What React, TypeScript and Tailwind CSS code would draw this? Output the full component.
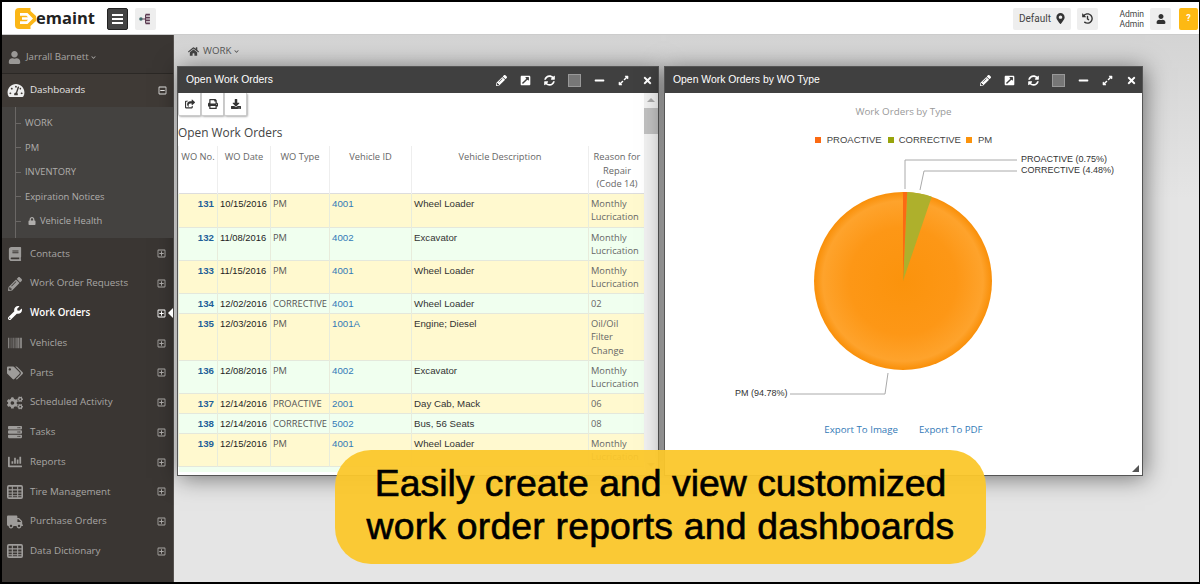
import {
  FaBook,
  FaChartBar,
  FaChevronDown,
  FaCogs,
  FaDownload,
  FaExpandAlt,
  FaExternalLinkSquareAlt,
  FaHistory,
  FaHome,
  FaLock,
  FaMapMarkerAlt,
  FaMinus,
  FaPencilAlt,
  FaPrint,
  FaRegMinusSquare,
  FaRegPlusSquare,
  FaServer,
  FaShareSquare,
  FaSyncAlt,
  FaTachometerAlt,
  FaTags,
  FaTimes,
  FaTruck,
  FaUser,
  FaWrench,
  FaBarcode,
} from "react-icons/fa";

const TableIcon = ({ className }: { className?: string }) => (
  <svg viewBox="0 0 15 13" className={className} fill="none" stroke="currentColor">
    <rect x="0.75" y="0.75" width="13.5" height="11.5" rx="1" strokeWidth="1.5" />
    <path d="M1 4.5H14M1 7.5H14M1 10H14M5 1V12M10 1V12" strokeWidth="1" />
  </svg>
);

const menuItems: { label: string; icon: React.ComponentType<{ className?: string }>; active?: boolean }[] = [
  { label: "Contacts", icon: FaBook },
  { label: "Work Order Requests", icon: FaPencilAlt },
  { label: "Work Orders", icon: FaWrench, active: true },
  { label: "Vehicles", icon: FaBarcode },
  { label: "Parts", icon: FaTags },
  { label: "Scheduled Activity", icon: FaCogs },
  { label: "Tasks", icon: FaServer },
  { label: "Reports", icon: FaChartBar },
  { label: "Tire Management", icon: TableIcon },
  { label: "Purchase Orders", icon: FaTruck },
  { label: "Data Dictionary", icon: TableIcon },
];

const rows = [
  { no: "131", date: "10/15/2016", type: "PM", id: "4001", desc: "Wheel Loader", reason: ["Monthly", "Lucrication"], h: "h-[34px]" },
  { no: "132", date: "11/08/2016", type: "PM", id: "4002", desc: "Excavator", reason: ["Monthly", "Lucrication"], h: "h-[33px]" },
  { no: "133", date: "11/15/2016", type: "PM", id: "4001", desc: "Wheel Loader", reason: ["Monthly", "Lucrication"], h: "h-[33px]" },
  { no: "134", date: "12/02/2016", type: "CORRECTIVE", id: "4001", desc: "Wheel Loader", reason: ["02"], h: "h-[20px]" },
  { no: "135", date: "12/03/2016", type: "PM", id: "1001A", desc: "Engine; Diesel", reason: ["Oil/Oil", "Filter", "Change"], h: "h-[47px]" },
  { no: "136", date: "12/08/2016", type: "PM", id: "4002", desc: "Excavator", reason: ["Monthly", "Lucrication"], h: "h-[33px]" },
  { no: "137", date: "12/14/2016", type: "PROACTIVE", id: "2001", desc: "Day Cab, Mack", reason: ["06"], h: "h-[20px]" },
  { no: "138", date: "12/14/2016", type: "CORRECTIVE", id: "5002", desc: "Bus, 56 Seats", reason: ["08"], h: "h-[20px]" },
  { no: "139", date: "12/15/2016", type: "PM", id: "4001", desc: "Wheel Loader", reason: ["Monthly", "Lucrication"], h: "h-[33px]" },
];

const Logo = () => (
  <div className="flex items-center">
    <svg width="21" height="21" viewBox="0 0 21 21">
      <rect width="21" height="21" rx="4" fill="#fbb616" />
      <path d="M5 5H12.5L18 10.5L12.5 16H5V13.2H11.5L13 11.8H7V9.2H13L11.5 7.8H5Z" fill="#fff" />
      <path d="M15.5 0H21V8L15.5 3Z M15.5 21H21V13L15.5 18Z" fill="#fff" />
    </svg>
    <span className="font-['Open_Sans',sans-serif] text-[16.5px] leading-none font-bold text-[#222]">emaint</span>
  </div>
);

const Sidebar = () => (
  <aside className="flex w-[172px] shrink-0 flex-col border-r border-[#55514e] bg-[#3a3633] font-['Open_Sans',sans-serif]">
    <div className="flex h-[39px] shrink-0 items-center border-b border-[#2b2825] pl-[6px] pt-[6px] text-[9.7px] text-[#a8a6a4]">
      <FaUser className="mr-[5px] text-[13px] text-[#9a9896]" />
      Jarrall Barnett
      <FaChevronDown className="ml-[2px] text-[5px]" />
    </div>
    <div className="flex h-[33px] shrink-0 items-center bg-[#3f3a36] pl-[5px] pr-[5px] text-[9.8px] text-[#e6e5e4]">
      <FaTachometerAlt className="w-[18px] text-[15px] text-[#eee]" />
      <span className="ml-[5px] flex-1">Dashboards</span>
      <FaRegMinusSquare className="mr-[1px] text-[9px]" />
    </div>
    <div className="relative h-[131px] shrink-0 bg-[#444240] pt-[4px] text-[9.4px] text-[#b0aeac]">
      <div className="absolute left-[13px] top-0 h-[131px] w-px bg-[#6a6765]" />
      {["WORK", "PM", "INVENTORY", "Expiration Notices"].map((t) => (
        <div key={t} className="relative flex h-[24.5px] items-center pl-[23px]">
          <div className="absolute left-[13px] h-px w-[6px] bg-[#6a6765]" />
          {t}
        </div>
      ))}
      <div className="relative flex h-[24.5px] items-center pl-[26px]">
        <div className="absolute left-[13px] h-px w-[6px] bg-[#6a6765]" />
        <FaLock className="mr-[4px] text-[8px]" />
        Vehicle Health
      </div>
    </div>
    <nav className="flex flex-col pt-[1px]">
      {menuItems.map((m) => (
        <div
          key={m.label}
          className={`relative flex h-[29.75px] items-center pl-[5px] pr-[7px] text-[9.8px] ${m.active ? "font-semibold text-white" : "text-[#a8a6a4]"}`}
        >
          <m.icon className={`h-[14px] w-[16px] ${m.active ? "text-white" : "text-[#9e9c9a]"}`} />
          <span className="ml-[7px] flex-1">{m.label}</span>
          <FaRegPlusSquare className="text-[9px]" />
          {m.active && (
            <div className="absolute right-0 h-0 w-0 border-y-[5px] border-r-[5px] border-y-transparent border-r-white" />
          )}
        </div>
      ))}
    </nav>
  </aside>
);

const Toolbar = () => (
  <div className="flex items-center gap-[13px] text-[11px] text-white">
    <FaPencilAlt />
    <FaExternalLinkSquareAlt />
    <FaSyncAlt />
    <div className="h-[13px] w-[13px] border border-[#999] bg-[#777]" />
    <FaMinus />
    <FaExpandAlt />
    <FaTimes />
  </div>
);

const PanelHeader = ({ title }: { title: string }) => (
  <div className="flex h-[26px] shrink-0 items-center justify-between bg-[#404040] pl-[8px] pr-[5px] font-['Liberation_Sans',sans-serif] text-[10.4px] text-white">
    {title}
    <Toolbar />
  </div>
);

const WorkOrdersTable = () => (
  <table className="w-[467px] table-fixed border-collapse font-['Open_Sans',sans-serif] text-[9.3px]">
    <colgroup>
      <col className="w-[39px]" />
      <col className="w-[53px]" />
      <col className="w-[59px]" />
      <col className="w-[82px]" />
      <col className="w-[177px]" />
      <col className="w-[57px]" />
    </colgroup>
    <thead>
      <tr className="h-[47px] border-b border-[#ddd] text-[#666]">
        {["WO No.", "WO Date", "WO Type", "Vehicle ID", "Vehicle Description"].map((h) => (
          <th key={h} className="border-x border-[#eee] pt-[4px] align-top leading-[13px] font-normal">{h}</th>
        ))}
        <th className="border-x border-[#eee] pt-[4px] align-top leading-[13.5px] font-normal">
          Reason for
          <br />
          Repair
          <br />
          (Code 14)
        </th>
      </tr>
    </thead>
    <tbody>
      {rows.map((r, i) => (
        <tr key={r.no} className={`${r.h} border-b border-[#e4e8dc] ${i % 2 === 0 ? "bg-[#fff9cf]" : "bg-[#f0ffef]"}`}>
          <td className="border-x border-[#e8ecdc] pt-[3px] pr-[3px] text-right align-top font-['Liberation_Sans',sans-serif] text-[9.7px] leading-[13px] font-bold text-[#1f5f99]">{r.no}</td>
          <td className="border-x border-[#e8ecdc] pl-[2px] pt-[3px] align-top font-['Liberation_Sans',sans-serif] text-[9.4px] leading-[13px] whitespace-nowrap text-[#222]">{r.date}</td>
          <td className="border-x border-[#e8ecdc] pl-[2px] pt-[3px] align-top leading-[14px] whitespace-nowrap text-[#555]">{r.type}</td>
          <td className="border-x border-[#e8ecdc] pl-[2px] pt-[3px] align-top font-['Liberation_Sans',sans-serif] text-[9.7px] leading-[13px] text-[#337ab7]">{r.id}</td>
          <td className="border-x border-[#e8ecdc] pl-[2px] pt-[3px] align-top font-['Liberation_Sans',sans-serif] text-[9.7px] leading-[13px] text-[#333]">{r.desc}</td>
          <td className="border-x border-[#e8ecdc] pl-[2px] pt-[3px] align-top leading-[13.5px] text-[#666]">
            {r.reason.map((t) => <div key={t}>{t}</div>)}
          </td>
        </tr>
      ))}
      <tr className="h-[6px] bg-[#f0ffef]"><td colSpan={6} /></tr>
    </tbody>
  </table>
);

const Pie = () => (
  <svg width="400" height="300" viewBox="0 0 400 300">
    <defs>
      <radialGradient id="pm" cx="50%" cy="50%" r="50%">
        <stop offset="0%" stopColor="#fb930c" />
        <stop offset="60%" stopColor="#fd9716" />
        <stop offset="90%" stopColor="#fea32c" />
        <stop offset="100%" stopColor="#f98f08" />
      </radialGradient>
    </defs>
    <circle cx="200" cy="147" r="89" fill="url(#pm)" />
    <path d="M200 147L204.2 58.1A89 89 0 0 1 228.7 62.8Z" fill="#aeb02c" />
    <path d="M200 147L200 58A89 89 0 0 1 204.2 58.1Z" fill="#fb6a13" />
    <g fill="none" stroke="#aaa" strokeWidth="1">
      <path d="M202 55V26H314" />
      <path d="M217 56L221 37H314" />
      <path d="M185 239L182 260H87" />
    </g>
  </svg>
);

const App = () => (
  <div className="relative flex h-[584px] w-[1200px] flex-col overflow-hidden border-b-2 border-l-2 border-r border-t-2 border-black bg-[#e5e5e5]">
    <header className="flex h-[33px] shrink-0 items-center border-b border-[#ccc] bg-white pl-[13px] pr-[1px] pt-[1px]">
      <Logo />
      <div className="ml-[12px] flex h-[22px] w-[21px] items-center justify-center rounded-[2px] border border-[#222] bg-[#444] text-white">
        <div className="flex w-[11px] flex-col gap-[2px]">
          <div className="h-[2px] bg-white" />
          <div className="h-[2px] bg-white" />
          <div className="h-[2px] bg-white" />
        </div>
      </div>
      <div className="ml-[7px] flex h-[22px] w-[21px] items-center justify-center rounded-[2px] bg-[#eee]">
        <svg width="12" height="12" viewBox="0 0 11 11" fill="none" stroke="#5d3b52" strokeWidth="1">
          <circle cx="1.8" cy="5.5" r="1.6" fill="#3d6b6b" stroke="none" />
          <path d="M3 5.5H6M6 1.5V9.5" />
          <path d="M6 1.5H10M6 4.2H10M6 6.8H10M6 9.5H10" strokeWidth="1.5" />
        </svg>
      </div>
      <div className="ml-auto flex items-center font-['Roboto',sans-serif]">
        <div className="flex h-[22px] w-[58px] items-center justify-center rounded-[2px] bg-[#eee] text-[10px] text-[#444]">
          Default
          <FaMapMarkerAlt className="ml-[4px] text-[11px] text-[#333]" />
        </div>
        <div className="ml-[6px] flex h-[22px] w-[21px] items-center justify-center rounded-[2px] bg-[#eee] text-[11px] text-[#333]">
          <FaHistory />
        </div>
        <div className="ml-[21px] mt-[1px] text-right text-[8.5px] leading-[10px] text-[#444]">
          <div>Admin</div>
          <div>Admin</div>
        </div>
        <div className="ml-[6px] flex h-[22px] w-[21px] items-center justify-center rounded-[2px] bg-[#eee] text-[10px] text-[#333]">
          <FaUser />
        </div>
        <div className="ml-[8px] flex h-[22px] w-[19px] items-center justify-center rounded-[2px] bg-[#fdb913] text-[9px] font-bold text-white">?</div>
      </div>
    </header>
    <div className="flex min-h-0 flex-1">
      <Sidebar />
      <main className="flex-1 bg-[linear-gradient(180deg,#d4d4d4,#e5e5e5_30%)] pl-[3px]">
        <div className="flex h-[31px] items-center pl-[11px] pt-[1px] font-['Open_Sans',sans-serif] text-[9.7px] text-[#555]">
          <FaHome className="mr-[4px] text-[11px] text-[#444]" />
          WORK
          <FaChevronDown className="ml-[3px] text-[5px]" />
        </div>
        <div className="flex gap-[5px]">
          <section className="flex h-[410px] w-[482px] flex-col border border-[#555] bg-white shadow-[2px_2px_22px_rgba(0,0,0,0.5)]">
            <PanelHeader title="Open Work Orders" />
            <div className="flex min-h-0 flex-1">
              <div className="w-[467px] overflow-hidden">
                <div className="flex h-[23px]">
                  {[FaShareSquare, FaPrint, FaDownload].map((Icon, i) => (
                    <div key={i} className="flex h-[23px] w-[23px] items-center justify-center rounded-b-[2px] border border-t-0 border-[#ccc] bg-white text-[10px] text-[#333] shadow-[1px_1px_2px_rgba(0,0,0,0.3)]">
                      <Icon />
                    </div>
                  ))}
                </div>
                <div className="flex h-[30px] items-center pt-[3px] font-['Open_Sans',sans-serif] text-[11.9px] text-[#444]">Open Work Orders</div>
                <WorkOrdersTable />
              </div>
              <div className="flex w-[14px] flex-col items-center bg-[#f1f1f1] pt-[5px]">
                <div className="h-0 w-0 border-x-[4px] border-b-[4px] border-x-transparent border-b-[#aaa]" />
                <div className="mt-[6px] h-[26px] w-full bg-[#c1c1c1]" />
                <div className="mb-[8px] mt-auto h-0 w-0 border-x-[4px] border-t-[4px] border-x-transparent border-t-[#aaa]" />
              </div>
            </div>
          </section>
          <section className="relative flex h-[410px] w-[479px] flex-col border border-[#555] bg-white shadow-[2px_2px_22px_rgba(0,0,0,0.5)]">
            <PanelHeader title="Open Work Orders by WO Type" />
            <div className="flex flex-1 flex-col items-center font-['Open_Sans',sans-serif]">
              <div className="mt-[12px] text-[9.8px] leading-[13px] text-[#999]">Work Orders by Type</div>
              <div className="mt-[16px] flex items-center font-['Liberation_Sans',sans-serif] text-[9.5px] leading-[12px] text-[#444]">
                <span className="mr-[6px] h-[6px] w-[6px] bg-[#fb6a13]" />
                PROACTIVE
                <span className="ml-[6px] mr-[5px] h-[6px] w-[6px] bg-[#98a40c]" />
                CORRECTIVE
                <span className="ml-[5px] mr-[6px] h-[6px] w-[6px] bg-[#fb930c]" />
                PM
              </div>
              <div className="relative mt-[-12px] ml-[-1px] h-[300px] w-[400px] font-['Liberation_Sans',sans-serif] text-[9px] leading-[11px] whitespace-nowrap text-[#333]">
                <Pie />
                <span className="absolute left-[318px] top-[20px]">PROACTIVE (0.75%)</span>
                <span className="absolute left-[318px] top-[31px]">CORRECTIVE (4.48%)</span>
                <span className="absolute left-[32px] top-[254px]">PM (94.78%)</span>
              </div>
              <div className="mt-[-11px] flex gap-[21px] text-[9.7px] text-[#337ab7]">
                <span>Export To Image</span>
                <span>Export To PDF</span>
              </div>
            </div>
            <svg width="7" height="7" viewBox="0 0 7 7" className="absolute bottom-[3px] right-[3px]">
              <path d="M7 0V7H0Z" fill="#555" />
            </svg>
          </section>
        </div>
      </main>
    </div>
    <div className="absolute left-[333px] top-[448px] flex h-[114px] w-[651px] flex-col items-center justify-center rounded-[36px] bg-[#fbc72b]/95 pb-[5px] font-['Liberation_Sans',sans-serif] text-[37.4px] leading-[43px] whitespace-nowrap text-black [-webkit-text-stroke:0.6px_black]">
      <div>Easily create and view customized</div>
      <div className="tracking-[0.18px]">work order reports and dashboards</div>
    </div>
  </div>
);

export default App;
